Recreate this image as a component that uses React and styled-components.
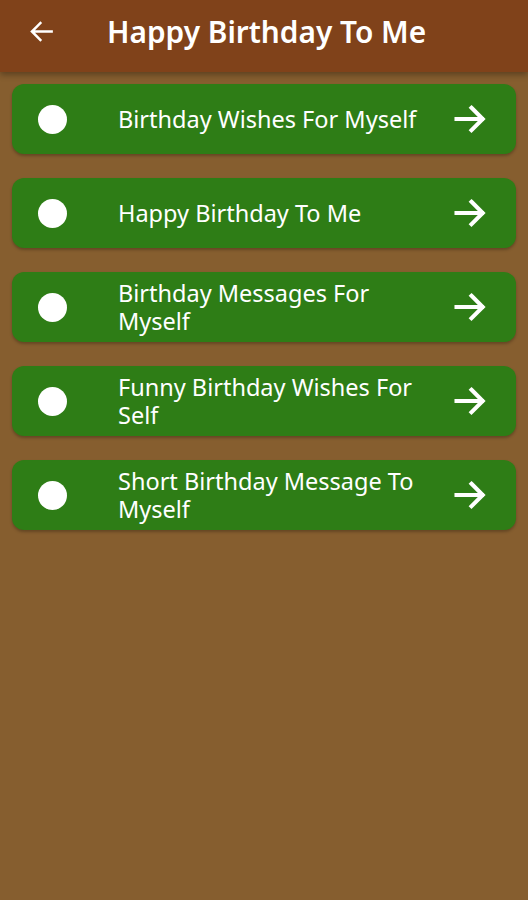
import React from 'react';
import styled, { createGlobalStyle } from 'styled-components';

const GlobalStyle = createGlobalStyle`
  html, body {
    margin: 0;
    padding: 0;
    background-color: #865e2f;
  }
  * {
    box-sizing: border-box;
  }
`;

const Page = styled.div`
  min-height: 900px;
  background-color: #865e2f;
  font-family: "Noto Sans", "Open Sans", sans-serif;
`;

const Toolbar = styled.header`
  height: 72px;
  background-color: #80421a;
  display: flex;
  align-items: center;
  padding: 0 0 10px 28px;
  box-shadow: 0 3px 6px rgba(0, 0, 0, 0.3);
  position: relative;
  z-index: 1;
`;

const BackButton = styled.button`
  background: none;
  border: none;
  padding: 0;
  width: 27px;
  height: 27px;
  display: flex;
  align-items: center;
  justify-content: center;
  cursor: pointer;
`;

const Title = styled.h1`
  margin: 0 0 0 52px;
  color: #ffffff;
  font-size: 29.8px;
  font-weight: 600;
`;

const List = styled.div`
  display: flex;
  flex-direction: column;
  gap: 24px;
  padding: 12px 12px;
`;

const Card = styled.div`
  height: 70px;
  background-color: #2e7d16;
  border-radius: 12px;
  box-shadow: 0 2px 3px rgba(0, 0, 0, 0.25);
  display: flex;
  align-items: center;
  padding: 0 28px 0 26px;
  cursor: pointer;
`;

const Dot = styled.span`
  width: 29px;
  height: 29px;
  border-radius: 50%;
  background-color: #ffffff;
  flex-shrink: 0;
`;

const Label = styled.span`
  flex: 1;
  margin-left: 51px;
  margin-right: 20px;
  color: #ffffff;
  font-size: 23.5px;
  line-height: 28px;
`;

const ArrowIcon = ({ dir = 'right', size = 36, stroke = 2.7 }) => (
  <svg width={size} height={size} viewBox="0 0 24 24" fill="none"
    stroke="#ffffff" strokeWidth={stroke} strokeLinecap="square"
    style={{ transform: dir === 'left' ? 'scaleX(-1)' : 'none', flexShrink: 0 }}>
    <path d="M3 12h17M13 4.5l7.5 7.5L13 19.5" />
  </svg>
);

const items = [
  'Birthday Wishes For Myself',
  'Happy Birthday To Me',
  'Birthday Messages For Myself',
  'Funny Birthday Wishes For Self',
  'Short Birthday Message To Myself',
];

export default function App() {
  return (
    <>
      <GlobalStyle />
      <Page>
        <Toolbar>
          <BackButton aria-label="back">
            <ArrowIcon dir="left" size={27} stroke={2.2} />
          </BackButton>
          <Title>Happy Birthday To Me</Title>
        </Toolbar>
        <List>
          {items.map((item) => (
            <Card key={item}>
              <Dot />
              <Label>{item}</Label>
              <ArrowIcon />
            </Card>
          ))}
        </List>
      </Page>
    </>
  );
}
